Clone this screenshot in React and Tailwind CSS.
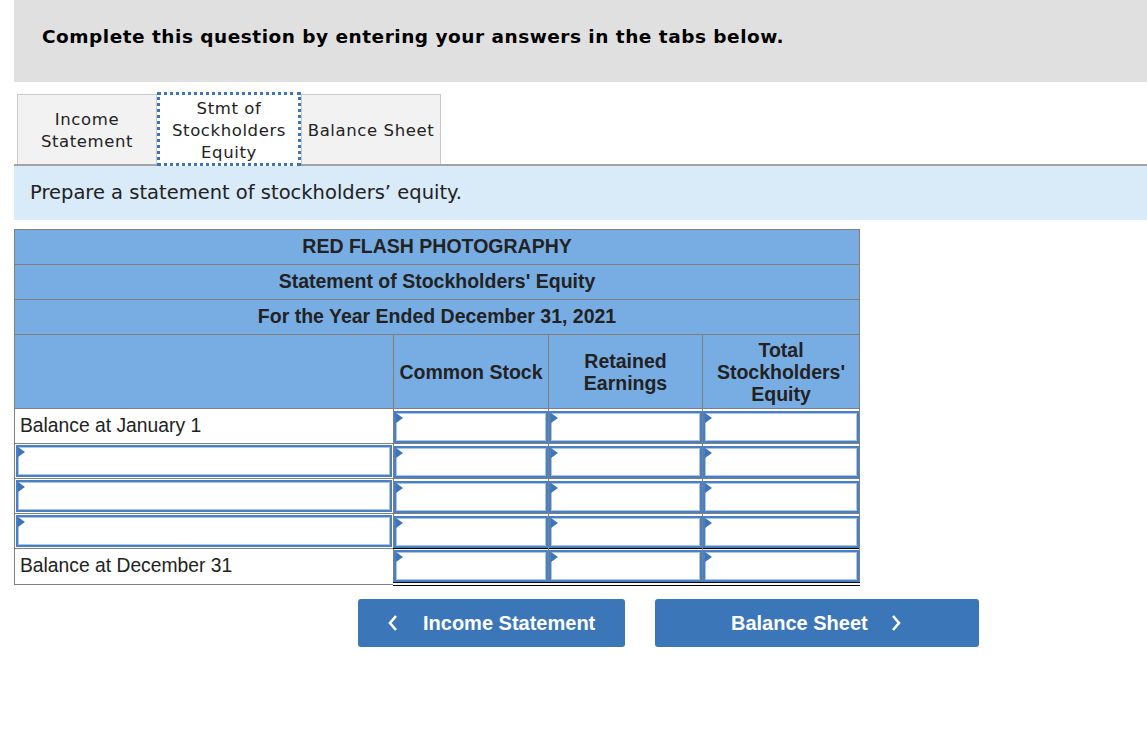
import React from "react";

const verdana = { fontFamily: '"DejaVu Sans", Verdana, sans-serif' };
const arial = { fontFamily: '"Liberation Sans", Arial, sans-serif' };

function Flag() {
  return (
    <span className="absolute top-0 left-0 w-0 h-0 border-y-[5px] border-y-transparent border-l-[7px] border-l-[#3d75ba]" />
  );
}

function CellInput() {
  return (
    <div className="relative h-[32px] border-2 border-[#4a7fc1] bg-white shadow-[inset_0_0_0_1px_#a9c6ea]">
      <Flag />
    </div>
  );
}

function Tab({ children, active }) {
  if (active) {
    return (
      <div className="relative z-10 w-[144px] h-[74px] -mt-[2px] -mb-[2px] pt-[4px] bg-white flex items-center justify-center text-center leading-[22px] outline-[3px] outline-dotted outline-[#3d75ba] -outline-offset-[3px]">
        {children}
      </div>
    );
  }
  return (
    <div className="w-[140px] h-[70px] pt-[2px] bg-[#f2f2f2] border border-b-0 border-[#c9c9c9] flex items-center justify-center text-center leading-[22px]">
      {children}
    </div>
  );
}

function DataRow({ label, last }) {
  const num = last
    ? "border-t border-t-black border-b-[4px] border-b-black border-double"
    : "";
  return (
    <tr className="h-[35px]">
      <td className="border border-[#7f7f7f] px-[5px] text-[19.3px] text-[#222]">
        {label ? label : <div className="-mx-[4px]"><CellInput /></div>}
      </td>
      {[0, 1, 2].map((i) => (
        <td key={i} className={"border border-[#7f7f7f] p-0 pt-[1px] " + num}>
          <CellInput />
        </td>
      ))}
    </tr>
  );
}

export default function App() {
  return (
    <div className="w-[1147px] h-[756px] bg-white pl-[14px] text-[#1a1a1a]">
      <div className="h-[82px] bg-[#e0e0e0] pl-[28px] flex items-center" style={verdana}>
        <h1 className="text-[18.5px] tracking-[0.5px] font-bold text-black -mt-[9px]">
          Complete this question by entering your answers in the tabs below.
        </h1>
      </div>

      <div className="mt-[12px] pl-[3px] flex border-b-2 border-[#a3a3a3] text-[16.5px] tracking-[0.6px] text-[#222]" style={verdana}>
        <Tab>Income<br />Statement</Tab>
        <Tab active>Stmt of<br />Stockholders<br />Equity</Tab>
        <Tab>Balance Sheet</Tab>
      </div>

      <div className="h-[54px] bg-[#d9eaf9] pl-[16px] flex items-center text-[19.5px] text-[#222]" style={verdana}>
        Prepare a statement of stockholders’ equity.
      </div>

      <table className="mt-[9px] w-[845px] border-collapse table-fixed" style={arial}>
        <colgroup>
          <col className="w-[379px]" />
          <col className="w-[155px]" />
          <col className="w-[154px]" />
          <col className="w-[157px]" />
        </colgroup>
        <thead className="bg-[#78ade4] text-[#222] font-bold text-[19.5px]">
          <tr className="h-[35px]">
            <th colSpan={4} className="border border-[#7f7f7f] font-bold">RED FLASH PHOTOGRAPHY</th>
          </tr>
          <tr className="h-[35px]">
            <th colSpan={4} className="border border-[#7f7f7f] font-bold">Statement of Stockholders' Equity</th>
          </tr>
          <tr className="h-[35px]">
            <th colSpan={4} className="border border-[#7f7f7f] font-bold">For the Year Ended December 31, 2021</th>
          </tr>
          <tr className="h-[74px] leading-[22px]">
            <th className="border border-[#7f7f7f]"></th>
            <th className="border border-[#7f7f7f] font-bold">Common Stock</th>
            <th className="border border-[#7f7f7f] font-bold">Retained<br />Earnings</th>
            <th className="border border-[#7f7f7f] font-bold">Total<br />Stockholders'<br />Equity</th>
          </tr>
        </thead>
        <tbody>
          <DataRow label="Balance at January 1" />
          <DataRow />
          <DataRow />
          <DataRow />
          <DataRow label="Balance at December 31" last />
        </tbody>
      </table>

      <div className="mt-[13px] pl-[344px] flex gap-[30px] text-white font-bold text-[20px]" style={arial}>
        <button className="w-[267px] h-[48px] bg-[#3b76b9] rounded-[3px] flex items-center pl-[29px]">
          <svg width="12" height="18" viewBox="0 0 12 18" className="mr-[24px]">
            <path d="M9 2 L3 9 L9 16" fill="none" stroke="white" strokeWidth="2.6" />
          </svg>
          Income Statement
        </button>
        <button className="w-[324px] h-[48px] bg-[#3b76b9] rounded-[3px] flex items-center pl-[76px]">
          Balance Sheet
          <svg width="12" height="18" viewBox="0 0 12 18" className="ml-[22px]">
            <path d="M3 2 L9 9 L3 16" fill="none" stroke="white" strokeWidth="2.6" />
          </svg>
        </button>
      </div>
    </div>
  );
}
